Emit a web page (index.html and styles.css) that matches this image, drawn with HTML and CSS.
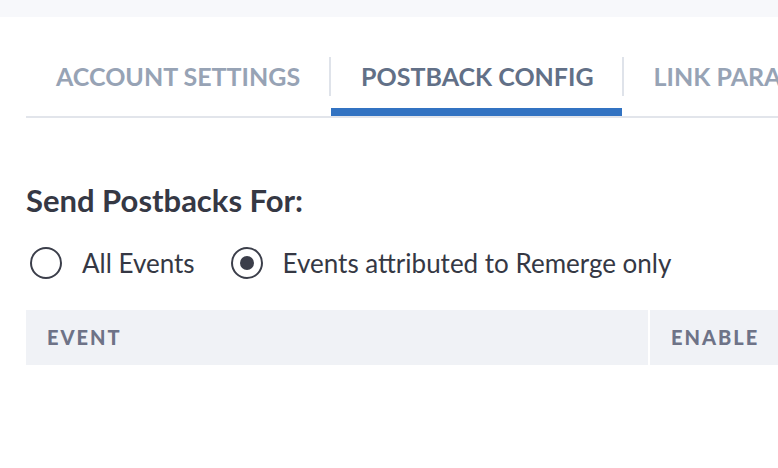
FILE: index.html
```html
<!DOCTYPE html>
<html lang="en">
<head>
<meta charset="utf-8">
<title>Postback Config</title>
<link rel="stylesheet" href="styles.css">
</head>
<body>
<div class="topbar"></div>
<main class="page">
  <nav class="tabs">
    <div class="tab">ACCOUNT SETTINGS</div>
    <span class="sep"></span>
    <div class="tab active">POSTBACK CONFIG</div>
    <span class="sep"></span>
    <div class="tab">LINK PARAMETERS</div>
  </nav>
  <h2 class="section-title">Send Postbacks For:</h2>
  <div class="radios">
    <label class="radio"><span class="radio-circle"></span><span class="radio-label">All Events</span></label>
    <label class="radio"><span class="radio-circle checked"></span><span class="radio-label">Events attributed to Remerge only</span></label>
  </div>
  <div class="table-head">
    <div class="th th-event">EVENT</div>
    <div class="th th-enable">ENABLE</div>
  </div>
</main>
</body>
</html>
```
FILE: styles.css
```css
html, body {
  margin: 0;
  padding: 0;
  background: #ffffff;
  overflow: hidden;
}
body {
  font-family: Lato, "Open Sans", sans-serif;
  color: #353844;
  width: 778px;
  height: 468px;
}
.topbar {
  height: 17px;
  background: #f7f8fb;
}
.page {
  padding-left: 26px;
  overflow: hidden;
}
.tabs {
  margin-top: 40px;
  display: flex;
  align-items: flex-start;
  border-bottom: 2px solid #e2e5eb;
  white-space: nowrap;
}
.tab {
  flex: none;
  padding: 4px 29px 0 30px;
  height: 47px;
  border-bottom: 8px solid transparent;
  font-size: 25px;
  line-height: 31px;
  font-weight: 700;
  color: #97a3b5;
}
.tab.active {
  color: #627087;
  border-bottom-color: #3273c2;
  padding-right: 28px;
}
.sep {
  flex: none;
  width: 2px;
  height: 39px;
  background: #dfe3ea;
}
.section-title {
  margin: 64px 0 0;
  font-size: 31px;
  line-height: 36px;
  font-weight: 700;
  color: #353844;
}
.radios {
  display: flex;
  align-items: center;
  margin-top: 25px;
  height: 40px;
}
.radio {
  display: flex;
  align-items: center;
  font-size: 26px;
  color: #353844;
}
.radio + .radio {
  margin-left: 36px;
}
.radio:first-child {
  margin-left: 4px;
}
.radio-circle {
  box-sizing: border-box;
  width: 32px;
  height: 32px;
  border: 2px solid #3b3e4a;
  border-radius: 50%;
  display: flex;
  align-items: center;
  justify-content: center;
  margin-right: 20px;
}
.radio-circle.checked::after {
  content: "";
  width: 14px;
  height: 14px;
  border-radius: 50%;
  background: #3b3e4a;
}
.table-head {
  display: flex;
  gap: 2px;
  margin-top: 27px;
  height: 55px;
}
.th {
  background: #f0f2f6;
  display: flex;
  align-items: center;
  padding-left: 21px;
  padding-bottom: 2px;
  font-size: 20px;
  font-weight: 900;
  letter-spacing: 2px;
  color: #6e7387;
}
.th-event {
  width: 601px;
  flex: none;
}
.th-enable {
  flex: 1;
}
```
